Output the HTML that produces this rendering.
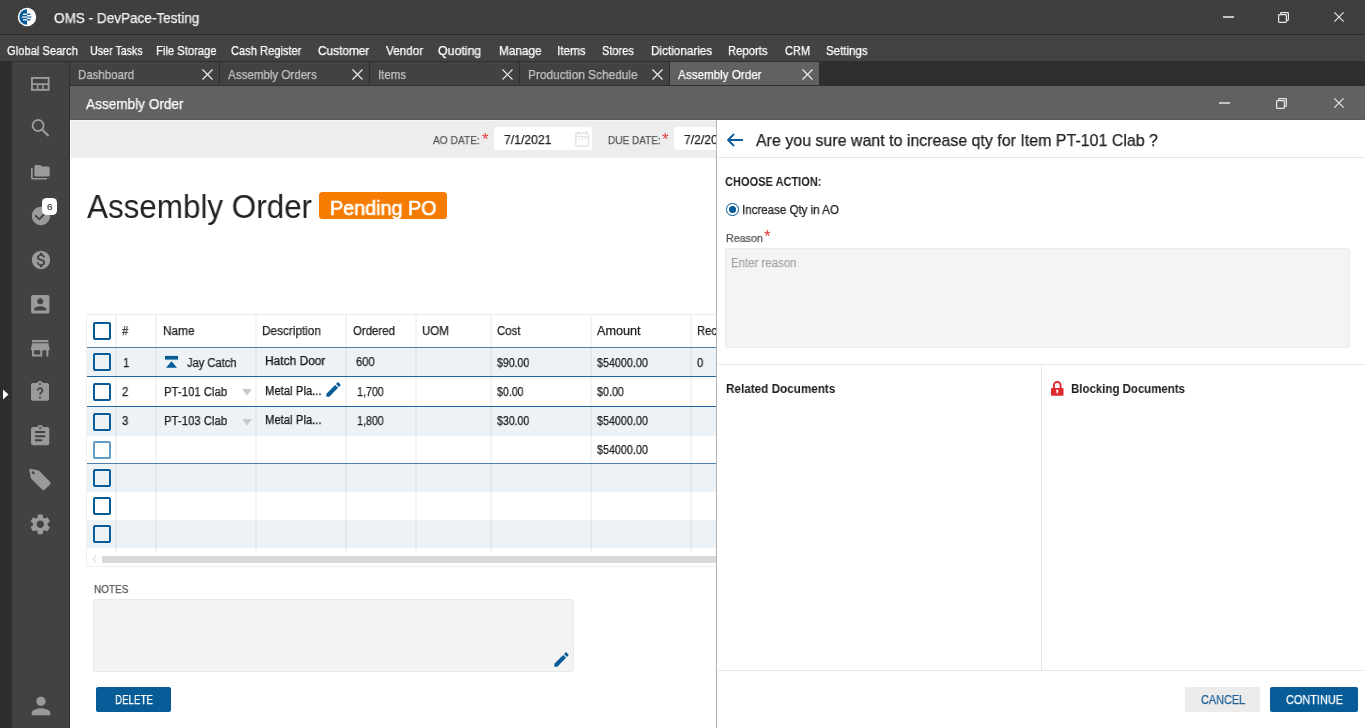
<!DOCTYPE html>
<html><head><meta charset="utf-8"><style>
html,body{margin:0;padding:0;}
body{width:1365px;height:728px;overflow:hidden;position:relative;background:#fff;font-family:"Liberation Sans",sans-serif;}
.b{position:absolute;box-sizing:content-box;}
.t{will-change:transform;position:absolute;white-space:nowrap;line-height:1;transform-origin:0 0;}
svg{display:block;overflow:visible;}
</style></head><body>
<div class="b" style="left:0px;top:0px;width:1365px;height:34px;background:#3f3f3f;"></div>
<div class="b" style="left:0px;top:34px;width:1365px;height:1px;background:#2b2b2b;"></div>
<div class="b" style="left:0px;top:35px;width:1365px;height:26px;background:#434343;"></div>
<div class="b" style="left:0px;top:61px;width:12px;height:667px;background:#2e2e2e;"></div>
<div class="b" style="left:12px;top:61px;width:58px;height:667px;background:#424242;"></div>
<div class="b" style="left:70px;top:61px;width:1295px;height:25px;background:#2f2f2f;"></div>
<div class="b" style="left:70px;top:62px;width:149px;height:23px;background:#424242;"></div>
<div class="b" style="left:220px;top:62px;width:149px;height:23px;background:#424242;"></div>
<div class="b" style="left:370px;top:62px;width:149px;height:23px;background:#424242;"></div>
<div class="b" style="left:520px;top:62px;width:149px;height:23px;background:#424242;"></div>
<div class="b" style="left:670px;top:62px;width:149px;height:23px;background:#616161;"></div>
<div class="b" style="left:70px;top:86px;width:1295px;height:34px;background:#616161;"></div>
<div class="b" style="left:70px;top:120px;width:646px;height:38px;background:#ededed;"></div>
<div class="b" style="left:70px;top:158px;width:646px;height:570px;background:#ffffff;"></div>
<div class="b" style="left:0px;top:61px;width:1365px;height:1px;background:#2f2f2f;"></div>
<div class="b" style="left:69px;top:61px;width:1px;height:667px;background:#303030;"></div>
<div class="b" style="left:70px;top:119px;width:1295px;height:1px;background:#585858;"></div>
<div class="b" style="left:70px;top:120px;width:646px;height:1px;background:#f6f6f6;"></div>
<div class="b" style="left:70px;top:120px;width:1px;height:608px;background:#f9f9f9;"></div>
<svg class="b" style="left:17px;top:7px" width="20" height="20" viewBox="0 0 20 20">
<circle cx="10" cy="10" r="9.2" fill="#fff"/>
<path d="M10 2.3 A7.7 7.7 0 0 0 10 17.7 Z" fill="#0a5d9c"/>
<rect x="6" y="6.6" width="4" height="1.3" fill="#fff"/><rect x="10" y="6.6" width="3.5" height="1.3" fill="#0a5d9c"/>
<rect x="5" y="9.3" width="5" height="1.6" fill="#cfd9e2"/><rect x="10" y="9.3" width="4.5" height="1.6" fill="#5d8fbb"/>
<rect x="6" y="12.1" width="4" height="1.3" fill="#fff"/><rect x="10" y="12.1" width="3.5" height="1.3" fill="#0a5d9c"/>
</svg>
<div class="b" style="left:1223px;top:16.2px;width:10.5px;height:2px;background:#c4c4c4"></div><svg class="b" style="left:1278px;top:11.7px" width="12" height="12" viewBox="0 0 12 12"><rect x="0.6" y="2.6" width="7.8" height="7.8" rx="0.8" fill="none" stroke="#e8e8e8" stroke-width="1.2"/><path d="M2.6 2.6V1.4Q2.6 0.6 3.4 0.6H9.6Q10.4 0.6 10.4 1.4V7.6Q10.4 8.4 9.6 8.4H8.4" fill="none" stroke="#e8e8e8" stroke-width="1.2"/></svg><svg class="b" style="left:1333.6px;top:12.2px" width="10" height="10" viewBox="0 0 10 10"><path d="M0.4 0.4L9.6 9.6M9.6 0.4L0.4 9.6" stroke="#e8e8e8" stroke-width="1.2"/></svg>
<div class="b" style="left:1219.3px;top:102.2px;width:10.5px;height:2px;background:#c4c4c4"></div><svg class="b" style="left:1276px;top:97.7px" width="12" height="12" viewBox="0 0 12 12"><rect x="0.6" y="2.6" width="7.8" height="7.8" rx="0.8" fill="none" stroke="#e8e8e8" stroke-width="1.2"/><path d="M2.6 2.6V1.4Q2.6 0.6 3.4 0.6H9.6Q10.4 0.6 10.4 1.4V7.6Q10.4 8.4 9.6 8.4H8.4" fill="none" stroke="#e8e8e8" stroke-width="1.2"/></svg><svg class="b" style="left:1333.6px;top:98.2px" width="10" height="10" viewBox="0 0 10 10"><path d="M0.4 0.4L9.6 9.6M9.6 0.4L0.4 9.6" stroke="#e8e8e8" stroke-width="1.2"/></svg>
<svg class="b" style="left:202px;top:69px" width="11" height="11" viewBox="0 0 11 11"><path d="M0.5 0.5L10.5 10.5M10.5 0.5L0.5 10.5" stroke="#ececec" stroke-width="1.2"/></svg>
<svg class="b" style="left:352px;top:69px" width="11" height="11" viewBox="0 0 11 11"><path d="M0.5 0.5L10.5 10.5M10.5 0.5L0.5 10.5" stroke="#ececec" stroke-width="1.2"/></svg>
<svg class="b" style="left:502px;top:69px" width="11" height="11" viewBox="0 0 11 11"><path d="M0.5 0.5L10.5 10.5M10.5 0.5L0.5 10.5" stroke="#ececec" stroke-width="1.2"/></svg>
<svg class="b" style="left:652px;top:69px" width="11" height="11" viewBox="0 0 11 11"><path d="M0.5 0.5L10.5 10.5M10.5 0.5L0.5 10.5" stroke="#ececec" stroke-width="1.2"/></svg>
<svg class="b" style="left:802px;top:69px" width="11" height="11" viewBox="0 0 11 11"><path d="M0.5 0.5L10.5 10.5M10.5 0.5L0.5 10.5" stroke="#ececec" stroke-width="1.2"/></svg>
<svg class="b" style="left:31.2px;top:76.9px" width="19" height="14" viewBox="0 0 19 14"><rect x="0.95" y="0.95" width="16.7" height="11.9" fill="none" stroke="#9a9a9a" stroke-width="1.9"/><path d="M1 7.1H17.6M6.7 7.1V13M11.9 7.1V13" stroke="#9a9a9a" stroke-width="1.6"/></svg>
<svg class="b" style="left:30px;top:118px" width="21" height="21" viewBox="0 0 21 21"><circle cx="8.1" cy="7.5" r="5.5" fill="none" stroke="#9a9a9a" stroke-width="1.9"/><path d="M12 11.4L18.6 18" stroke="#9a9a9a" stroke-width="2.1"/></svg>
<svg class="b" style="left:31.3px;top:165px" width="18.7" height="14.5" viewBox="1 2 22 19" preserveAspectRatio="none"><path d="M3 6H1v13c0 1.1.9 2 2 2h17v-2H3V6zM21 4h-7l-2-2H7c-1.1 0-1.99.9-1.99 2L5 15c0 1.1.9 2 2 2h14c1.1 0 2-.9 2-2V6c0-1.1-.9-2-2-2z" fill="#9a9a9a"/></svg>
<svg class="b" style="left:29.6px;top:205px" width="22" height="22" viewBox="0 0 24 24"><path d="M12 2C6.48 2 2 6.48 2 12s4.48 10 10 10 10-4.48 10-10S17.52 2 12 2zm-2 15l-5-5 1.41-1.41L10 14.17l7.59-7.59L19 8l-9 9z" fill="#9a9a9a"/></svg>
<div class="b" style="left:42px;top:197.8px;width:15px;height:17.3px;background:#fff;border-radius:4.5px;"></div>
<div class="t" style="left:46.9px;top:201.50px;font-size:9.8px;color:#3a3a3a;-webkit-text-stroke:0.2px #3a3a3a;">6</div>
<svg class="b" style="left:29.8px;top:249.4px" width="22" height="22" viewBox="0 0 24 24"><path d="M12 2C6.48 2 2 6.48 2 12s4.48 10 10 10 10-4.48 10-10S17.52 2 12 2zm1.41 16.09V20h-2.67v-1.93c-1.71-.36-3.16-1.46-3.27-3.4h1.96c.1 1.05.82 1.870 2.65 1.87 1.96 0 2.4-.98 2.4-1.59 0-.83-.44-1.61-2.67-2.14-2.48-.6-4.18-1.62-4.18-3.67 0-1.720 1.39-2.84 3.11-3.21V4h2.67v1.95c1.86.45 2.79 1.86 2.85 3.39H14.3c-.05-1.11-.64-1.87-2.22-1.87-1.5 0-2.4.68-2.4 1.64 0 .84.65 1.39 2.670 1.91s4.18 1.39 4.18 3.91c-.01 1.83-1.38 2.83-3.12 3.16z" fill="#9a9a9a"/></svg>
<svg class="b" style="left:28.2px;top:291.8px" width="24.5" height="24.5" viewBox="0 0 24 24"><path d="M3 5v14c0 1.1.89 2 2 2h14c1.1 0 2-.9 2-2V5c0-1.1-.9-2-2-2H5c-1.11 0-2 .9-2 2zm12 4c0 1.66-1.34 3-3 3s-3-1.34-3-3 1.34-3 3-3 3 1.34 3 3zm-9 8c0-2 4-3.1 6-3.1s6 1.1 6 3.1v1H6v-1z" fill="#9a9a9a"/></svg>
<svg class="b" style="left:28.2px;top:335.6px" width="24.5" height="24.5" viewBox="0 0 24 24"><path d="M20 4H4v2h16V4zm1 10v-2l-1-5H4l-1 5v2h1v6h10v-6h4v6h2v-6h1zm-9 4H6v-4h6v4z" fill="#9a9a9a"/></svg>
<svg class="b" style="left:28.4px;top:380.2px" width="24" height="23.6" viewBox="0 0 24 24" preserveAspectRatio="none"><path d="M19 3h-4.18C14.4 1.84 13.3 1 12 1c-1.3 0-2.4.84-2.82 2H5c-1.1 0-2 .9-2 2v14c0 1.1.9 2 2 2h14c1.1 0 2-.9 2-2V5c0-1.1-.9-2-2-2z" fill="#9a9a9a"/><circle cx="12" cy="4" r="1" fill="#424242"/><path d="M9.7 10.6a2.35 2.35 0 1 1 3.55 2.05c-.75.45-1.25.9-1.25 1.85v.35" fill="none" stroke="#424242" stroke-width="1.8"/><circle cx="12" cy="17.8" r="1.05" fill="#424242"/></svg>
<svg class="b" style="left:28.3px;top:423.8px" width="24.3" height="24.3" viewBox="0 0 24 24"><path d="M19 3h-4.18C14.4 1.84 13.3 1 12 1c-1.3 0-2.4.84-2.82 2H5c-1.1 0-2 .9-2 2v14c0 1.1.9 2 2 2h14c1.1 0 2-.9 2-2V5c0-1.1-.9-2-2-2zm-7 0c.55 0 1 .45 1 1s-.45 1-1 1-1-.45-1-1 .45-1 1-1zm2 14H7v-2h7v2zm3-4H7v-2h10v2zm0-4H7V7h10v2z" fill="#9a9a9a"/></svg>
<svg class="b" style="left:28px;top:468px" width="24" height="24" viewBox="0 0 24 24"><g transform="translate(12.6 12.2) rotate(45) scale(1.15 0.8) rotate(-45) translate(-12 -12)"><path d="M21.41 11.58l-9-9C12.05 2.22 11.55 2 11 2H4c-1.1 0-2 .9-2 2v7c0 .55.22 1.05.59 1.42l9 9c.36.36.86.58 1.41.58.55 0 1.05-.22 1.41-.59l7-7c.37-.36.59-.86.59-1.41 0-.55-.23-1.06-.59-1.42zM5.5 7C4.67 7 4 6.33 4 5.5S4.67 4 5.5 4 7 4.67 7 5.5 6.33 7 5.5 7z" fill="#9a9a9a"/></g></svg>
<svg class="b" style="left:28.4px;top:511.6px" width="24.6" height="24.6" viewBox="0 0 24 24"><path d="M19.14 12.94c.04-.3.06-.61.06-.94 0-.32-.02-.64-.07-.94l2.03-1.58c.18-.14.23-.41.12-.61l-1.92-3.32c-.12-.22-.37-.29-.59-.22l-2.39.96c-.5-.38-1.03-.7-1.62-.94l-.36-2.54c-.04-.24-.24-.41-.48-.41h-3.84c-.24 0-.43.17-.47.41l-.36 2.54c-.59.24-1.13.57-1.62.94l-2.39-.96c-.22-.08-.47 0-.59.22L2.74 8.87c-.12.21-.08.47.12.61l2.03 1.58c-.05.3-.09.63-.09.94s.02.64.07.94l-2.03 1.58c-.18.14-.23.41-.12.61l1.92 3.32c.12.22.37.29.59.22l2.39-.96c.5.38 1.03.7 1.62.94l.36 2.54c.05.24.24.41.48.41h3.84c.24 0 .44-.17.47-.41l.36-2.54c.59-.24 1.13-.56 1.62-.94l2.39.96c.22.08.47 0 .59-.22l1.92-3.32c.12-.22.07-.47-.12-.61l-2.01-1.58zM12 15.6c-1.98 0-3.6-1.620-3.6-3.6s1.62-3.6 3.6-3.6 3.6 1.62 3.6 3.6-1.62 3.6-3.6 3.6z" fill="#9a9a9a"/></svg>
<svg class="b" style="left:26.6px;top:691.9px" width="28" height="28" viewBox="0 0 24 24"><path d="M12 12c2.21 0 4-1.79 4-4s-1.79-4-4-4-4 1.79-4 4 1.79 4 4 4zm0 2c-2.67 0-8 1.34-8 4v2h16v-2c0-2.66-5.33-4-8-4z" fill="#9a9a9a"/></svg>
<svg class="b" style="left:2px;top:389px" width="8" height="11" viewBox="0 0 8 11"><path d="M1 0.5L6.5 5.5L1 10.5Z" fill="#fff"/></svg>
<div class="b" style="left:494px;top:127px;width:98px;height:23px;background:#ffffff;border-radius:3px;"></div>
<div class="b" style="left:674px;top:127px;width:60px;height:23px;background:#ffffff;border-radius:3px;"></div>
<div class="t" style="left:481.8px;top:130.91px;font-size:17px;color:#e53935">*</div>
<div class="t" style="left:661.5px;top:130.91px;font-size:17px;color:#e53935">*</div>
<svg class="b" style="left:575px;top:131px" width="15" height="16" viewBox="0 0 15 16"><rect x="0.8" y="2.3" width="12.6" height="13" rx="1.3" fill="none" stroke="#e4e4e4" stroke-width="1.5"/><path d="M0.8 5.6H13.4" stroke="#e4e4e4" stroke-width="1.5"/><path d="M3.1 0V3.2M11.1 0V3.2" stroke="#e4e4e4" stroke-width="1.6"/><rect x="3.2" y="7.2" width="1.6" height="1.9" fill="#e6e6e6"/><rect x="6.4" y="7.2" width="1.6" height="1.9" fill="#e6e6e6"/><rect x="9.7" y="7.2" width="1.6" height="1.9" fill="#e6e6e6"/></svg>
<div class="b" style="left:319px;top:192.2px;width:128px;height:27.3px;background:#f57c00;border-radius:3.5px;"></div>
<div class="b" style="left:86px;top:314px;width:630px;height:1px;background:#ececec;"></div>
<div class="b" style="left:86px;top:314px;width:1px;height:253px;background:#efefef;"></div>
<div class="b" style="left:86px;top:566px;width:630px;height:1px;background:#f0f0f0;"></div>
<div class="b" style="left:87px;top:348px;width:629px;height:28px;background:#ecf2f6;"></div>
<div class="b" style="left:87px;top:377px;width:629px;height:29px;background:#ffffff;"></div>
<div class="b" style="left:87px;top:407px;width:629px;height:28.5px;background:#ecf2f6;"></div>
<div class="b" style="left:87px;top:436px;width:629px;height:27px;background:#ffffff;"></div>
<div class="b" style="left:87px;top:464px;width:629px;height:27.5px;background:#ecf2f6;"></div>
<div class="b" style="left:87px;top:491.5px;width:629px;height:28.5px;background:#ffffff;"></div>
<div class="b" style="left:87px;top:520px;width:629px;height:28px;background:#ecf2f6;"></div>
<div class="b" style="left:114.7px;top:315px;width:2px;height:236.5px;background:rgba(140,155,170,0.11);"></div>
<div class="b" style="left:155px;top:315px;width:2px;height:236.5px;background:rgba(140,155,170,0.11);"></div>
<div class="b" style="left:255.2px;top:315px;width:2px;height:236.5px;background:rgba(140,155,170,0.11);"></div>
<div class="b" style="left:345.2px;top:315px;width:2px;height:236.5px;background:rgba(140,155,170,0.11);"></div>
<div class="b" style="left:415.2px;top:315px;width:2px;height:236.5px;background:rgba(140,155,170,0.11);"></div>
<div class="b" style="left:490px;top:315px;width:2px;height:236.5px;background:rgba(140,155,170,0.11);"></div>
<div class="b" style="left:590px;top:315px;width:2px;height:236.5px;background:rgba(140,155,170,0.11);"></div>
<div class="b" style="left:689.7px;top:315px;width:2px;height:236.5px;background:rgba(140,155,170,0.11);"></div>
<div class="b" style="left:87px;top:347px;width:629px;height:1px;background:#4f7eaa;"></div>
<div class="b" style="left:87px;top:376px;width:629px;height:1px;background:#1f67a3;"></div>
<div class="b" style="left:87px;top:406px;width:629px;height:1px;background:#1f67a3;"></div>
<div class="b" style="left:87px;top:462.5px;width:629px;height:1px;background:#4f7eaa;"></div>
<div class="b" style="left:93px;top:322px;width:14px;height:14px;border:2px solid #075b97;border-radius:2px;"></div>
<div class="b" style="left:93px;top:353px;width:14px;height:14px;border:2px solid #075b97;border-radius:2px;"></div>
<div class="b" style="left:93px;top:383px;width:14px;height:14px;border:2px solid #075b97;border-radius:2px;"></div>
<div class="b" style="left:93px;top:413px;width:14px;height:14px;border:2px solid #075b97;border-radius:2px;"></div>
<div class="b" style="left:93px;top:440.5px;width:14px;height:14px;border:2px solid #5d9dc6;border-radius:2px;"></div>
<div class="b" style="left:93px;top:469px;width:14px;height:14px;border:2px solid #075b97;border-radius:2px;"></div>
<div class="b" style="left:93px;top:497px;width:14px;height:14px;border:2px solid #075b97;border-radius:2px;"></div>
<div class="b" style="left:93px;top:525px;width:14px;height:14px;border:2px solid #075b97;border-radius:2px;"></div>
<svg class="b" style="left:165px;top:356px" width="13" height="12" viewBox="0 0 13 12"><rect x="0" y="-0.1" width="13" height="3.7" fill="#075b97"/><path d="M6.5 5.3L12 11.8H1Z" fill="#075b97"/></svg>
<svg class="b" style="left:242px;top:389.2px" width="10" height="7" viewBox="0 0 10 7"><path d="M0 0H10L5 6.6Z" fill="#c9c9c9"/></svg>
<svg class="b" style="left:242px;top:419.2px" width="10" height="7" viewBox="0 0 10 7"><path d="M0 0H10L5 6.6Z" fill="#c9c9c9"/></svg>
<svg class="b" style="left:323.5px;top:379.9px" width="19" height="19" viewBox="0 0 24 24"><path d="M3 17.25V21h3.75L17.81 9.94l-3.75-3.75L3 17.25zM20.71 7.04c.39-.39.39-1.02 0-1.41l-2.34-2.34c-.39-.39-1.02-.39-1.41 0l-1.83 1.83 3.75 3.75 1.83-1.83z" fill="#075b97"/></svg>
<div class="b" style="left:101.5px;top:555.5px;width:614.5px;height:7px;background:#d9d9d9;"></div>
<svg class="b" style="left:92px;top:555px" width="5" height="8" viewBox="0 0 5 8"><path d="M4.3 0.6L1.1 4L4.3 7.4" fill="none" stroke="#e4e4e4" stroke-width="1.4"/></svg>
<div class="b" style="left:93px;top:599px;width:479px;height:70.5px;background:#f3f3f3;border:1px solid #e9e9e9;border-radius:3px;"></div>
<svg class="b" style="left:551.5px;top:649.5px" width="19" height="19" viewBox="0 0 24 24"><path d="M3 17.25V21h3.75L17.81 9.94l-3.75-3.75L3 17.25zM20.71 7.04c.39-.39.39-1.02 0-1.41l-2.34-2.34c-.39-.39-1.02-.39-1.41 0l-1.83 1.83 3.75 3.75 1.83-1.83z" fill="#075b97"/></svg>
<div class="b" style="left:96px;top:687px;width:75px;height:25px;background:#075b97;border-radius:2px;"></div>
<div class="b" style="left:716px;top:120px;width:649px;height:608px;background:#ffffff;"></div>
<div class="b" style="left:716px;top:120px;width:1px;height:608px;background:#b4b4b4;"></div>
<div class="b" style="left:717px;top:157px;width:648px;height:1px;background:#e6e6e6;"></div>
<svg class="b" style="left:726px;top:133px" width="18" height="14" viewBox="0 0 18 14"><path d="M16.2 7H2.5M7.5 1.6L2.1 7L7.5 12.4" fill="none" stroke="#075b97" stroke-width="2" stroke-linecap="round" stroke-linejoin="round"/></svg>
<div class="b" style="left:726px;top:203px;width:10.5px;height:10.5px;border:1.3px solid #075b97;border-radius:50%;"></div>
<div class="b" style="left:729px;top:206px;width:7px;height:7px;background:#075b97;border-radius:50%;"></div>
<div class="t" style="left:764.3px;top:228.41px;font-size:17px;color:#e53935">*</div>
<div class="b" style="left:725px;top:248px;width:622.5px;height:97.5px;background:#f4f4f4;border:1px solid #ebebeb;border-radius:3px;"></div>
<div class="b" style="left:717px;top:364px;width:648px;height:1px;background:#e8e8e8;"></div>
<div class="b" style="left:1040.5px;top:365px;width:1px;height:305px;background:#e8e8e8;"></div>
<div class="b" style="left:717px;top:670px;width:648px;height:1px;background:#e8e8e8;"></div>
<svg class="b" style="left:1050px;top:380px" width="15" height="17" viewBox="0 0 15 17"><rect x="1" y="8" width="12.5" height="7.8" rx="1" fill="#de2a2e"/><path d="M3.9 8.3V5.3A3.35 3.35 0 0 1 10.6 5.3V8.3" fill="none" stroke="#de2a2e" stroke-width="1.9"/><path d="M6 9.7H8.5L7.7 13.6H6.8Z" fill="#fff"/></svg>
<div class="b" style="left:1185px;top:687px;width:75px;height:25px;background:#ececec;"></div>
<div class="b" style="left:1270px;top:687px;width:88px;height:25px;background:#075b97;border-radius:2px;"></div>
<div id="t0" class="t" style="left:54.10px;top:10.95px;font-size:14.00px;color:#f2f2f2;font-weight:400; transform:scaleX(0.9682);-webkit-text-stroke:0.25px #f2f2f2;">OMS - DevPace-Testing</div>
<div id="t1" class="t" style="left:6.50px;top:44.62px;font-size:12.50px;color:#ffffff;font-weight:400; transform:scaleX(0.8950);-webkit-text-stroke:0.25px #ffffff;">Global Search</div>
<div id="t2" class="t" style="left:90.30px;top:44.62px;font-size:12.50px;color:#ffffff;font-weight:400; transform:scaleX(0.8556);-webkit-text-stroke:0.25px #ffffff;">User Tasks</div>
<div id="t3" class="t" style="left:155.50px;top:44.62px;font-size:12.50px;color:#ffffff;font-weight:400; transform:scaleX(0.8975);-webkit-text-stroke:0.25px #ffffff;">File Storage</div>
<div id="t4" class="t" style="left:230.60px;top:44.62px;font-size:12.50px;color:#ffffff;font-weight:400; transform:scaleX(0.8889);-webkit-text-stroke:0.25px #ffffff;">Cash Register</div>
<div id="t5" class="t" style="left:317.70px;top:44.62px;font-size:12.50px;color:#ffffff;font-weight:400; transform:scaleX(0.9467);-webkit-text-stroke:0.25px #ffffff;">Customer</div>
<div id="t6" class="t" style="left:385.50px;top:44.62px;font-size:12.50px;color:#ffffff;font-weight:400; transform:scaleX(0.9363);-webkit-text-stroke:0.25px #ffffff;">Vendor</div>
<div id="t7" class="t" style="left:438.40px;top:44.62px;font-size:12.50px;color:#ffffff;font-weight:400; transform:scaleX(0.9867);-webkit-text-stroke:0.25px #ffffff;">Quoting</div>
<div id="t8" class="t" style="left:498.50px;top:44.62px;font-size:12.50px;color:#ffffff;font-weight:400; transform:scaleX(0.9405);-webkit-text-stroke:0.25px #ffffff;">Manage</div>
<div id="t9" class="t" style="left:557.40px;top:44.62px;font-size:12.50px;color:#ffffff;font-weight:400; transform:scaleX(0.9358);-webkit-text-stroke:0.25px #ffffff;">Items</div>
<div id="t10" class="t" style="left:602.30px;top:44.62px;font-size:12.50px;color:#ffffff;font-weight:400; transform:scaleX(0.8771);-webkit-text-stroke:0.25px #ffffff;">Stores</div>
<div id="t11" class="t" style="left:650.50px;top:44.62px;font-size:12.50px;color:#ffffff;font-weight:400; transform:scaleX(0.9370);-webkit-text-stroke:0.25px #ffffff;">Dictionaries</div>
<div id="t12" class="t" style="left:728.40px;top:44.62px;font-size:12.50px;color:#ffffff;font-weight:400; transform:scaleX(0.8999);-webkit-text-stroke:0.25px #ffffff;">Reports</div>
<div id="t13" class="t" style="left:784.50px;top:44.62px;font-size:12.50px;color:#ffffff;font-weight:400; transform:scaleX(0.8817);-webkit-text-stroke:0.25px #ffffff;">CRM</div>
<div id="t14" class="t" style="left:826.00px;top:44.62px;font-size:12.50px;color:#ffffff;font-weight:400; transform:scaleX(0.9209);-webkit-text-stroke:0.25px #ffffff;">Settings</div>
<div id="t15" class="t" style="left:78.40px;top:68.00px;font-size:13.00px;color:#c4c4c4;font-weight:400; transform:scaleX(0.8835);-webkit-text-stroke:0.25px #c4c4c4;">Dashboard</div>
<div id="t16" class="t" style="left:228.20px;top:68.00px;font-size:13.00px;color:#c4c4c4;font-weight:400; transform:scaleX(0.8906);-webkit-text-stroke:0.25px #c4c4c4;">Assembly Orders</div>
<div id="t17" class="t" style="left:378.40px;top:68.00px;font-size:13.00px;color:#c4c4c4;font-weight:400; transform:scaleX(0.8806);-webkit-text-stroke:0.25px #c4c4c4;">Items</div>
<div id="t18" class="t" style="left:528.40px;top:68.00px;font-size:13.00px;color:#c4c4c4;font-weight:400; transform:scaleX(0.9135);-webkit-text-stroke:0.25px #c4c4c4;">Production Schedule</div>
<div id="t19" class="t" style="left:678.40px;top:68.00px;font-size:13.00px;color:#ffffff;font-weight:400; transform:scaleX(0.8970);-webkit-text-stroke:0.25px #ffffff;">Assembly Order</div>
<div id="t20" class="t" style="left:86.20px;top:96.63px;font-size:14.50px;color:#ffffff;font-weight:400; transform:scaleX(0.9379);-webkit-text-stroke:0.25px #ffffff;">Assembly Order</div>
<div id="t21" class="t" style="left:433.30px;top:134.69px;font-size:11.00px;color:#555555;font-weight:400; transform:scaleX(0.9242);-webkit-text-stroke:0.25px #555555;">AO DATE:</div>
<div id="t22" class="t" style="left:503.80px;top:132.57px;font-size:13.50px;color:#212121;font-weight:400; transform:scaleX(0.9037);-webkit-text-stroke:0.25px #212121;">7/1/2021</div>
<div id="t23" class="t" style="left:607.50px;top:134.69px;font-size:11.00px;color:#555555;font-weight:400; transform:scaleX(0.9108);-webkit-text-stroke:0.25px #555555;">DUE DATE:</div>
<div id="t24" class="t" style="left:684.40px;top:132.57px;font-size:13.50px;color:#212121;font-weight:400; transform:scaleX(0.9000);clip-path:inset(-5px 0 -5px 0);width:35px;overflow:hidden;-webkit-text-stroke:0.25px #212121;">7/2/2021</div>
<div id="t25" class="t" style="left:87.00px;top:189.80px;font-size:33.20px;color:#222222;font-weight:400; transform:scaleX(0.9458);">Assembly Order</div>
<div id="t26" class="t" style="left:330.00px;top:198.27px;font-size:20.00px;color:#ffffff;font-weight:400; transform:scaleX(0.9874);-webkit-text-stroke:0.6px #fff;">Pending PO</div>
<div id="t27" class="t" style="left:121.90px;top:325.02px;font-size:12.50px;color:#212121;font-weight:400; transform:scaleX(0.9000);-webkit-text-stroke:0.25px #212121;">#</div>
<div id="t28" class="t" style="left:162.50px;top:325.02px;font-size:12.50px;color:#212121;font-weight:400; transform:scaleX(0.9447);-webkit-text-stroke:0.25px #212121;">Name</div>
<div id="t29" class="t" style="left:262.40px;top:325.02px;font-size:12.50px;color:#212121;font-weight:400; transform:scaleX(0.9435);-webkit-text-stroke:0.25px #212121;">Description</div>
<div id="t30" class="t" style="left:352.50px;top:325.02px;font-size:12.50px;color:#212121;font-weight:400; transform:scaleX(0.9137);-webkit-text-stroke:0.25px #212121;">Ordered</div>
<div id="t31" class="t" style="left:422.40px;top:325.02px;font-size:12.50px;color:#212121;font-weight:400; transform:scaleX(0.9187);-webkit-text-stroke:0.25px #212121;">UOM</div>
<div id="t32" class="t" style="left:497.30px;top:325.02px;font-size:12.50px;color:#212121;font-weight:400; transform:scaleX(0.9104);-webkit-text-stroke:0.25px #212121;">Cost</div>
<div id="t33" class="t" style="left:597.00px;top:325.02px;font-size:12.50px;color:#212121;font-weight:400; transform:scaleX(1.0094);-webkit-text-stroke:0.25px #212121;">Amount</div>
<div id="t34" class="t" style="left:697.20px;top:325.02px;font-size:12.50px;color:#212121;font-weight:400; transform:scaleX(0.9000);width:20.9px;overflow:hidden;-webkit-text-stroke:0.25px #212121;">Rec</div>
<div id="t35" class="t" style="left:123.00px;top:356.92px;font-size:12.50px;color:#212121;font-weight:400; transform:scaleX(0.9000);-webkit-text-stroke:0.25px #212121;">1</div>
<div id="t36" class="t" style="left:187.00px;top:356.92px;font-size:12.50px;color:#212121;font-weight:400; transform:scaleX(0.8886);-webkit-text-stroke:0.25px #212121;">Jay Catch</div>
<div id="t37" class="t" style="left:497.30px;top:356.92px;font-size:12.50px;color:#212121;font-weight:400; transform:scaleX(0.8448);-webkit-text-stroke:0.25px #212121;">$90.00</div>
<div id="t38" class="t" style="left:597.00px;top:356.92px;font-size:12.50px;color:#212121;font-weight:400; transform:scaleX(0.8597);-webkit-text-stroke:0.25px #212121;">$54000.00</div>
<div id="t39" class="t" style="left:697.00px;top:356.92px;font-size:12.50px;color:#212121;font-weight:400; transform:scaleX(0.9000);-webkit-text-stroke:0.25px #212121;">0</div>
<div id="t40" class="t" style="left:122.00px;top:385.92px;font-size:12.50px;color:#212121;font-weight:400; transform:scaleX(0.9000);-webkit-text-stroke:0.25px #212121;">2</div>
<div id="t41" class="t" style="left:164.00px;top:385.92px;font-size:12.50px;color:#212121;font-weight:400; transform:scaleX(0.9096);-webkit-text-stroke:0.25px #212121;">PT-101 Clab</div>
<div id="t42" class="t" style="left:356.50px;top:385.92px;font-size:12.50px;color:#212121;font-weight:400; transform:scaleX(0.8535);-webkit-text-stroke:0.25px #212121;">1,700</div>
<div id="t43" class="t" style="left:497.30px;top:385.92px;font-size:12.50px;color:#212121;font-weight:400; transform:scaleX(0.8472);-webkit-text-stroke:0.25px #212121;">$0.00</div>
<div id="t44" class="t" style="left:597.00px;top:385.92px;font-size:12.50px;color:#212121;font-weight:400; transform:scaleX(0.8567);-webkit-text-stroke:0.25px #212121;">$0.00</div>
<div id="t45" class="t" style="left:122.00px;top:415.32px;font-size:12.50px;color:#212121;font-weight:400; transform:scaleX(0.9000);-webkit-text-stroke:0.25px #212121;">3</div>
<div id="t46" class="t" style="left:164.00px;top:415.32px;font-size:12.50px;color:#212121;font-weight:400; transform:scaleX(0.9096);-webkit-text-stroke:0.25px #212121;">PT-103 Clab</div>
<div id="t47" class="t" style="left:356.50px;top:415.32px;font-size:12.50px;color:#212121;font-weight:400; transform:scaleX(0.8535);-webkit-text-stroke:0.25px #212121;">1,800</div>
<div id="t48" class="t" style="left:497.30px;top:415.32px;font-size:12.50px;color:#212121;font-weight:400; transform:scaleX(0.8448);-webkit-text-stroke:0.25px #212121;">$30.00</div>
<div id="t49" class="t" style="left:597.00px;top:415.32px;font-size:12.50px;color:#212121;font-weight:400; transform:scaleX(0.8597);-webkit-text-stroke:0.25px #212121;">$54000.00</div>
<div id="t50" class="t" style="left:597.00px;top:444.42px;font-size:12.50px;color:#212121;font-weight:400; transform:scaleX(0.8597);-webkit-text-stroke:0.25px #212121;">$54000.00</div>
<div id="t51" class="t" style="left:355.80px;top:355.72px;font-size:12.50px;color:#212121;font-weight:400; transform:scaleX(0.8869);-webkit-text-stroke:0.25px #212121;">600</div>
<div id="t52" class="t" style="left:265.40px;top:354.62px;font-size:12.50px;color:#111111;font-weight:400; transform:scaleX(0.9552);-webkit-text-stroke:0.25px #111111;">Hatch Door</div>
<div id="t53" class="t" style="left:265.40px;top:384.62px;font-size:12.50px;color:#111111;font-weight:400; transform:scaleX(0.9051);-webkit-text-stroke:0.25px #111111;">Metal Pla...</div>
<div id="t54" class="t" style="left:265.40px;top:414.42px;font-size:12.50px;color:#111111;font-weight:400; transform:scaleX(0.9051);-webkit-text-stroke:0.25px #111111;">Metal Pla...</div>
<div id="t55" class="t" style="left:93.50px;top:584.27px;font-size:11.50px;color:#555555;font-weight:400; transform:scaleX(0.8656);-webkit-text-stroke:0.25px #555555;">NOTES</div>
<div id="t56" class="t" style="left:115.00px;top:694.42px;font-size:12.50px;color:#ffffff;font-weight:400; transform:scaleX(0.7812);-webkit-text-stroke:0.25px #ffffff;">DELETE</div>
<div id="t57" class="t" style="left:755.50px;top:132.01px;font-size:17.00px;color:#212121;font-weight:400; transform:scaleX(0.9389);-webkit-text-stroke:0.25px #212121;">Are you sure want to increase qty for Item PT-101 Clab ?</div>
<div id="t58" class="t" style="left:725.30px;top:175.52px;font-size:12.50px;color:#212121;font-weight:700; transform:scaleX(0.8832);">CHOOSE ACTION:</div>
<div id="t59" class="t" style="left:742.40px;top:203.92px;font-size:12.50px;color:#212121;font-weight:400; transform:scaleX(0.9235);-webkit-text-stroke:0.25px #212121;">Increase Qty in AO</div>
<div id="t60" class="t" style="left:725.60px;top:233.29px;font-size:11.00px;color:#555555;font-weight:400; transform:scaleX(0.9731);-webkit-text-stroke:0.25px #555555;">Reason</div>
<div id="t61" class="t" style="left:730.60px;top:257.02px;font-size:12.50px;color:#a6a6a6;font-weight:400; transform:scaleX(0.9137);-webkit-text-stroke:0.25px #a6a6a6;">Enter reason</div>
<div id="t62" class="t" style="left:725.60px;top:383.42px;font-size:12.50px;color:#1a1a1a;font-weight:700; transform:scaleX(0.9366);">Related Documents</div>
<div id="t63" class="t" style="left:1070.80px;top:383.02px;font-size:12.50px;color:#1a1a1a;font-weight:700; transform:scaleX(0.9169);">Blocking Documents</div>
<div id="t64" class="t" style="left:1200.60px;top:694.42px;font-size:12.50px;color:#1a5e96;font-weight:400; transform:scaleX(0.8715);-webkit-text-stroke:0.25px #1a5e96;">CANCEL</div>
<div id="t65" class="t" style="left:1285.70px;top:694.42px;font-size:12.50px;color:#ffffff;font-weight:400; transform:scaleX(0.8716);-webkit-text-stroke:0.25px #ffffff;">CONTINUE</div>
</body></html>
